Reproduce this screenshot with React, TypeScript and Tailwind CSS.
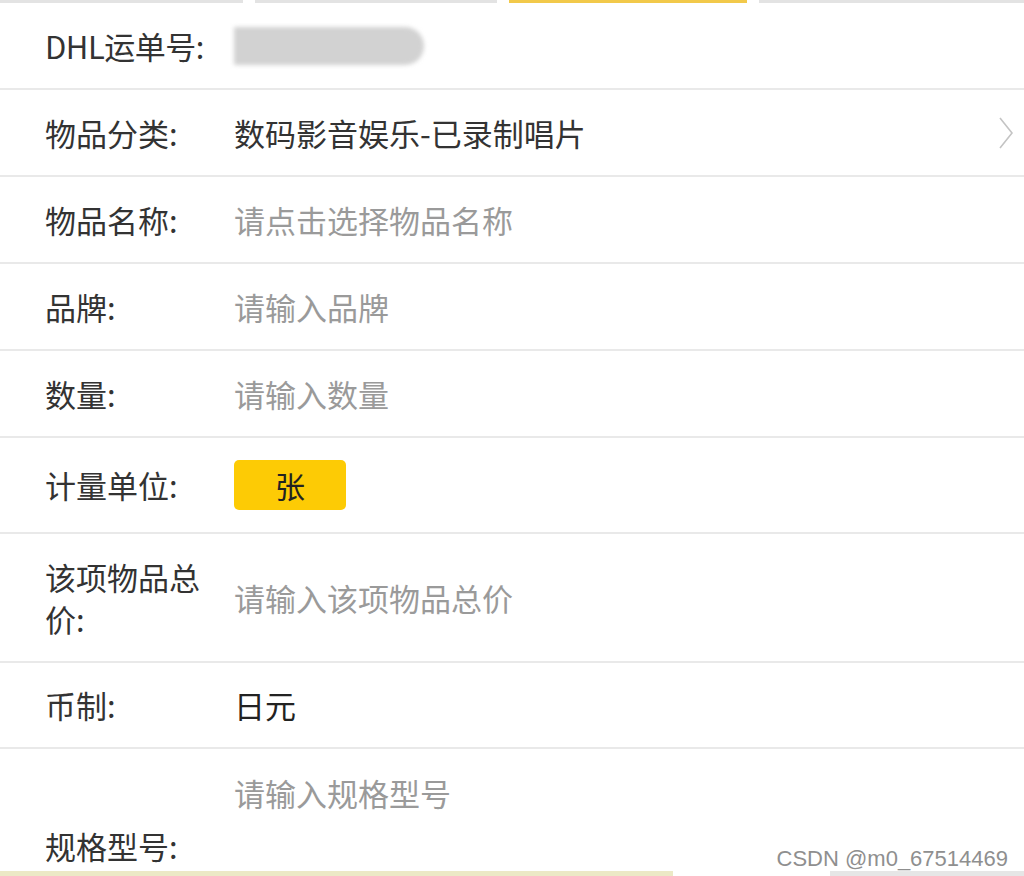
const font = { fontFamily: '"Noto Sans CJK SC", "Noto Sans", sans-serif' };

function Row({
  label,
  children,
  className = "h-[85px]",
  right,
}: {
  label: React.ReactNode;
  children: React.ReactNode;
  className?: string;
  right?: React.ReactNode;
}) {
  return (
    <div className={`flex items-center border-b-2 border-[#e9e9e9] pl-[45px] pr-[10px] ${className}`}>
      <div className="w-[189px] shrink-0 pr-[30px] text-[31px] leading-[42px] text-[#333]">{label}</div>
      <div className="flex-1 text-[31px] leading-[42px]">{children}</div>
      {right}
    </div>
  );
}

export default function App() {
  return (
    <div className="relative h-[876px] w-[1024px] overflow-hidden bg-white" style={font}>
      {/* tab strip at the top */}
      <div className="flex h-[4px] items-start gap-[12px]">
        <div className="h-[3px] w-[243px] bg-[#e3e3e3]" />
        <div className="h-[3px] w-[242px] bg-[#e3e3e3]" />
        <div className="h-[3px] w-[238px] bg-[#f2c94a]" />
        <div className="h-[3px] flex-1 bg-[#e3e3e3]" />
      </div>

      <Row label={<span className="whitespace-nowrap tracking-[-0.5px]">DHL运单号:</span>} className="h-[86px]">
        <div className="h-[38px] w-[190px] rounded-r-full bg-[#d2d2d2] blur-[2px]" />
      </Row>

      <Row
        label="物品分类:"
        className="h-[87px]"
        right={
          <svg width="16" height="34" viewBox="0 0 16 34" className="shrink-0">
            <path d="M2 2 L14 17 L2 32" fill="none" stroke="#c4c4c4" strokeWidth="1.6" />
          </svg>
        }
      >
        <span className="text-[#333]">数码影音娱乐-已录制唱片</span>
      </Row>

      <Row label="物品名称:" className="h-[87px]">
        <span className="text-[#9a9a9a]">请点击选择物品名称</span>
      </Row>

      <Row label="品牌:" className="h-[87px]">
        <span className="text-[#9a9a9a]">请输入品牌</span>
      </Row>

      <Row label="数量:" className="h-[87px]">
        <span className="text-[#9a9a9a]">请输入数量</span>
      </Row>

      <Row label="计量单位:" className="h-[96px]">
        <div className="flex h-[50px] w-[112px] items-center justify-center rounded-[5px] bg-[#fdcb05] text-[30px] text-[#222]">
          张
        </div>
      </Row>

      <Row
        label={
          <>
            该项物品总
            <br />
            价:
          </>
        }
        className="h-[129px]"
      >
        <span className="text-[#9a9a9a]">请输入该项物品总价</span>
      </Row>

      <Row label="币制:" className="h-[86px]">
        <span className="text-[#222]">日元</span>
      </Row>

      <div className="flex h-[119px] items-stretch pl-[45px]">
        <div className="flex w-[189px] shrink-0 items-end pb-[1px] text-[31px] leading-[42px] text-[#333]">
          规格型号:
        </div>
        <div className="pt-[23px] text-[31px] leading-[42px] text-[#9a9a9a]">请输入规格型号</div>
      </div>

      {/* bottom strip */}
      <div className="flex h-[8px] items-end">
        <div className="h-[5px] w-[673px] bg-[#ece9c6]" />
        <div className="h-[5px] w-[157px]" />
        <div className="h-[5px] flex-1 bg-[#e6e6e6]" />
      </div>

      <div
        className="absolute right-[16px] bottom-[6px] text-[22px] leading-none text-[#8f8f8f]"
        style={{ fontFamily: '"Liberation Sans", Arial, sans-serif', textShadow: "0 0 2px #fff" }}
      >
        CSDN @m0_67514469
      </div>
    </div>
  );
}
